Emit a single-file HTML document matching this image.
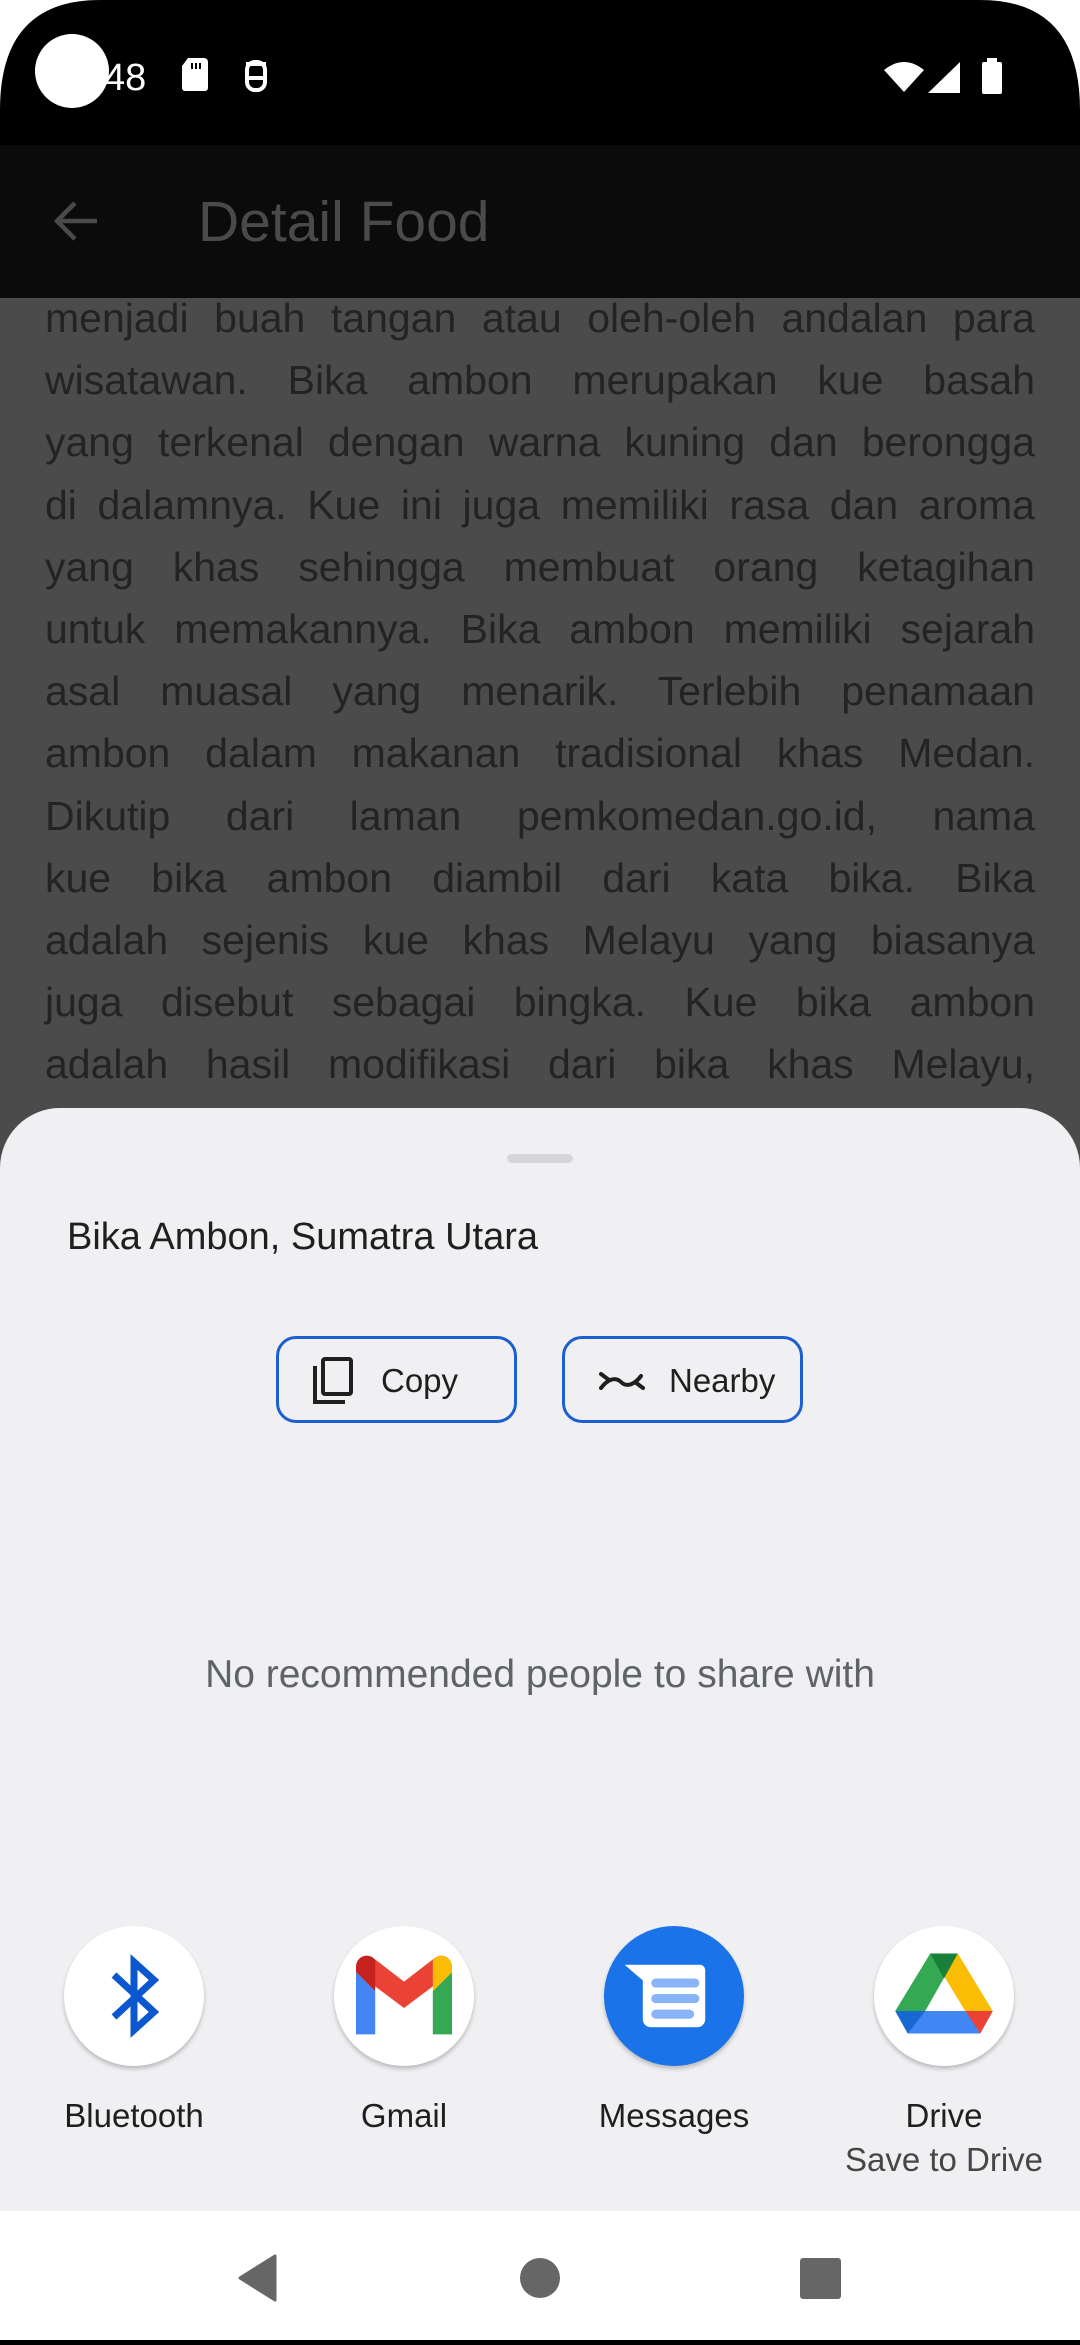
<!DOCTYPE html>
<html><head><meta charset="utf-8"><style>
*{margin:0;padding:0;box-sizing:border-box}
html,body{width:1080px;height:2340px;overflow:hidden;background:#000;font-family:"Liberation Sans",sans-serif}
.status{position:absolute;left:0;top:0;width:1080px;height:145px;background:#000}
.appbar{position:absolute;left:0;top:145px;width:1080px;height:153px;background:#0b0b0b}
.appbar .t{position:absolute;left:198px;top:44px;font-size:57px;color:#4a4a4a;line-height:66px}
.body{position:absolute;left:0;top:298px;width:1080px;height:900px;background:#4b4b4b;overflow:hidden}
.txt{position:absolute;left:45px;top:-11px;width:990px;font-size:41px;color:#232323;line-height:62.2px}
.txt div{text-align:justify;text-align-last:justify;white-space:nowrap;height:62.2px}
.sheet{position:absolute;left:0;top:1108px;width:1080px;height:1103px;background:#f0f0f3;border-radius:60px 60px 0 0}
.handle{position:absolute;left:507px;top:1154px;width:66px;height:9px;border-radius:5px;background:#d6d6da}
.title{position:absolute;left:67px;top:1215px;font-size:38px;color:#1f1f1f;line-height:44px}
.btn{position:absolute;top:1336px;height:87px;width:241px;border:3px solid #1b5fd1;border-radius:20px;font-size:33px;color:#1f1f1f}
.btn span{position:absolute;top:22px;line-height:40px}
.none{position:absolute;left:0;width:1080px;top:1653px;text-align:center;font-size:39px;color:#5f6368}
.app{position:absolute;top:1920px;width:140px;height:140px;border-radius:50%;background:#fff;box-shadow:0 3px 4px rgba(0,0,0,.22)}
.lbl{position:absolute;width:260px;text-align:center;font-size:33px;color:#1f1f1f;line-height:40px}
.nav{position:absolute;left:0;top:2211px;width:1080px;height:129px;background:#fff}
</style></head><body>
<div class="status">
<svg width="1080" height="145" style="position:absolute;left:0;top:0">
<circle cx="72" cy="71" r="37" fill="#fff"/>
<text x="104" y="90" font-family="Liberation Sans" font-size="38" fill="#fff">48</text>
<path d="M188 58h16a4 4 0 0 1 4 4v26a3 3 0 0 1-3 3h-20a3 3 0 0 1-3-3V66z" fill="#fff"/>
<rect x="195" y="63" width="2" height="6" fill="#000"/><rect x="199" y="63" width="2" height="6" fill="#000"/><rect x="191" y="63" width="2" height="6" fill="#000"/>
<path d="M246 64h20M246 78h20" stroke="#fff" stroke-width="4"/>
<rect x="247" y="62" width="18" height="28" rx="8" fill="none" stroke="#fff" stroke-width="4"/>
<path d="M884 70q20-16 40 0l-20 22z" fill="#fff"/>
<path d="M960 62v31h-32z" fill="#fff"/>
<rect x="982" y="62" width="20" height="32" rx="2" fill="#fff"/><rect x="987" y="58" width="10" height="5" fill="#fff"/>
</svg>
</div>
<svg width="1080" height="200" style="position:absolute;left:0;top:0;pointer-events:none;z-index:10">
<path d="M0 0H100Q0 0 0 110Z" fill="#fff"/><path d="M1080 0H980Q1080 0 1080 110Z" fill="#fff"/>
</svg>
<div class="appbar"><div class="t">Detail Food</div>
<svg width="60" height="60" style="position:absolute;left:47px;top:46px"><path d="M50 30H12M28 12L10 30l18 18" stroke="#4a4a4a" stroke-width="4.5" fill="none"/></svg>
</div>
<div class="body"><div class="txt">
<div>menjadi buah tangan atau oleh-oleh andalan para</div>
<div>wisatawan. Bika ambon merupakan kue basah</div>
<div>yang terkenal dengan warna kuning dan berongga</div>
<div>di dalamnya. Kue ini juga memiliki rasa dan aroma</div>
<div>yang khas sehingga membuat orang ketagihan</div>
<div>untuk memakannya. Bika ambon memiliki sejarah</div>
<div>asal muasal yang menarik. Terlebih penamaan</div>
<div>ambon dalam makanan tradisional khas Medan.</div>
<div>Dikutip dari laman pemkomedan.go.id, nama</div>
<div>kue bika ambon diambil dari kata bika. Bika</div>
<div>adalah sejenis kue khas Melayu yang biasanya</div>
<div>juga disebut sebagai bingka. Kue bika ambon</div>
<div>adalah hasil modifikasi dari bika khas Melayu,</div>
<div>namun dengan bahan yang berbeda dari aslinya</div>
</div></div>
<div class="sheet"></div>
<div class="handle"></div>
<div class="title">Bika Ambon, Sumatra Utara</div>
<div class="btn" style="left:276px">
<svg width="44" height="50" style="position:absolute;left:32px;top:17px"><path d="M4 10v36h30" stroke="#1f1f1f" stroke-width="4" fill="none"/><rect x="12" y="3" width="28" height="35" rx="2" stroke="#1f1f1f" stroke-width="4" fill="none"/></svg>
<span style="left:102px">Copy</span></div>
<div class="btn" style="left:562px">
<svg width="46" height="30" style="position:absolute;left:34px;top:27px"><path d="M2 8l8 6M2 22c6-8 14-12 20-6s14 2 20-6M36 16l8 6" stroke="#1f1f1f" stroke-width="4" fill="none" stroke-linecap="round"/></svg>
<span style="left:104px">Nearby</span></div>
<div class="none">No recommended people to share with</div>

<div class="app" style="left:64px;top:1920px"><svg width="140" height="140"><path d="M50 49L90 86 70 104V36l20 18-40 37" stroke="#0b57d0" stroke-width="7" fill="none"/></svg></div>
<div class="app" style="left:334px"><svg width="140" height="140"><g transform="translate(70 70) scale(1.2) translate(-70 -70)">
<path d="M30 50v52h16V66z" fill="#4285f4"/><path d="M94 66v36h16V50z" fill="#34a853"/>
<path d="M30 50l40 30 40-30v-4c0-8-8-12-14-8L70 58 44 38c-6-4-14 0-14 8z" fill="#ea4335"/>
<path d="M94 66l16-16v-4c0-8-8-12-14-8l-2 2z" fill="#fbbc04"/><path d="M30 50l16 16V40l-2-2c-6-4-14 0-14 8z" fill="#c5221f"/></g></svg></div>
<div class="app" style="left:604px;background:#1a73e8"><svg width="140" height="140"><g transform="translate(70 70) scale(1.3) translate(-66 -66)"><path d="M28 42h58a4 4 0 0 1 4 4v38a6 6 0 0 1-6 6H48a6 6 0 0 1-6-6V54z" fill="#fff"/><g stroke="#8ab4f8" stroke-width="7" stroke-linecap="round"><path d="M52 56h30M52 68h30M52 80h26"/></g></g></svg></div>
<div class="app" style="left:874px"><svg width="140" height="140"><g transform="translate(70 70) scale(1.25) translate(-69 -62)">
<path d="M58 28h22l-26 46H30z" fill="#34a853"/><path d="M58 28h22l28 46H86z" fill="#fbbc04"/><path d="M30 74h78l-10 18H40z" fill="#4285f4"/><path d="M86 74h22l-10 18z" fill="#ea4335"/><path d="M30 74h24L40 92z" fill="#1967d2"/><path d="M58 28h22L69 48z" fill="#188038"/></g></svg></div>
<style>.app{top:1920px!important;margin-top:6px}</style>

<div class="lbl" style="left:4px;top:2096px">Bluetooth</div>
<div class="lbl" style="left:274px;top:2096px">Gmail</div>
<div class="lbl" style="left:544px;top:2096px">Messages</div>
<div class="lbl" style="left:814px;top:2096px">Drive</div>
<div class="lbl" style="left:814px;top:2140px;color:#444746">Save to Drive</div>

<div class="nav"><svg width="1080" height="129">
<path d="M275 45v44l-35-22z" fill="#666" stroke="#666" stroke-width="3" stroke-linejoin="round"/>
<circle cx="540" cy="67" r="20" fill="#666"/>
<rect x="800" y="47" width="41" height="41" rx="3" fill="#666"/>
</svg></div>
</body></html>
